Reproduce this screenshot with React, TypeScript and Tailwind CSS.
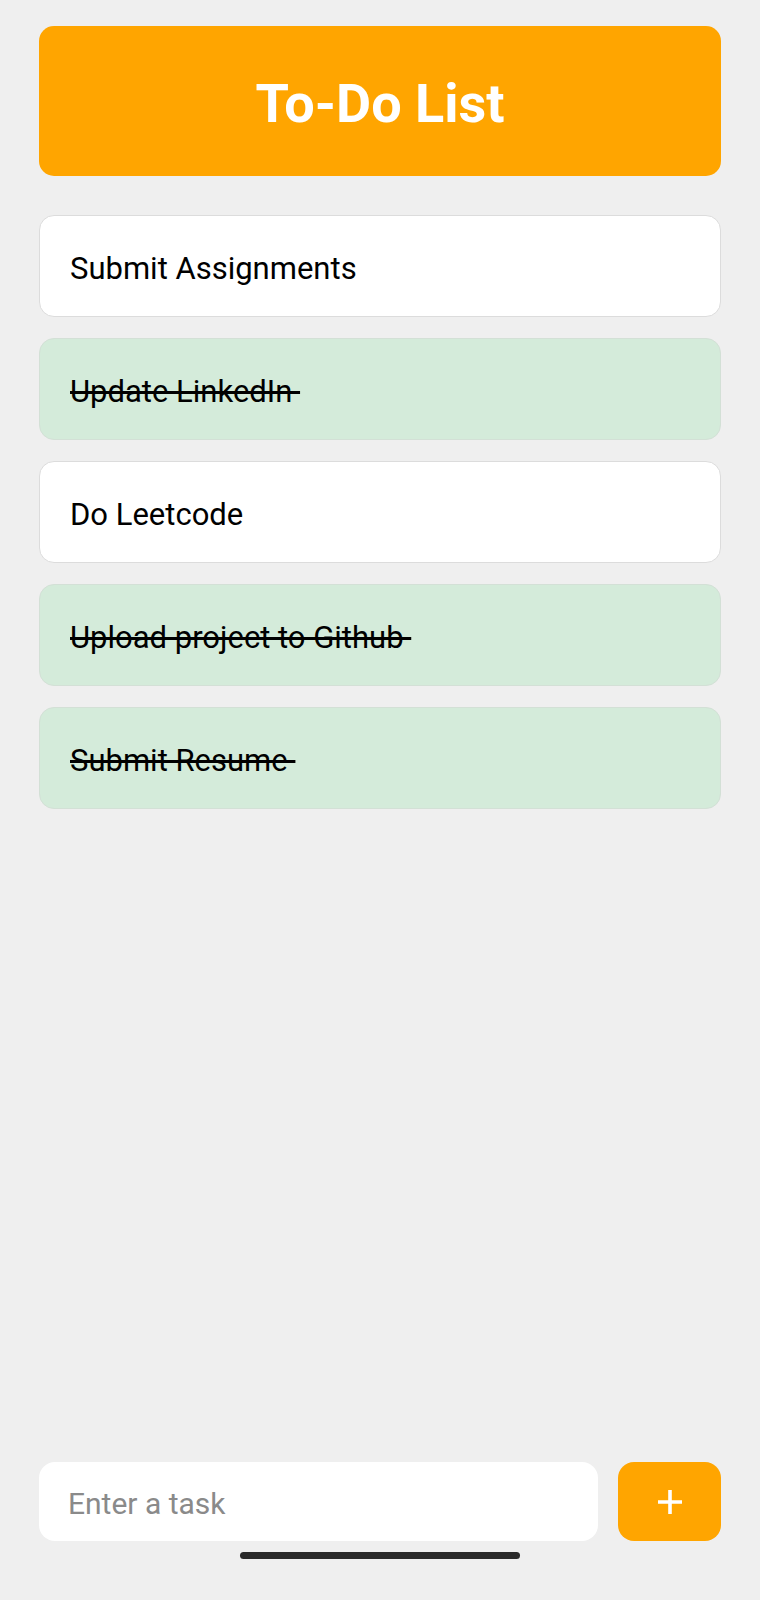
import { useState } from 'react';

type Task = {
  text: string;
  done: boolean;
};

const initialTasks: Task[] = [
  { text: 'Submit Assignments', done: false },
  { text: 'Update LinkedIn', done: true },
  { text: 'Do Leetcode', done: false },
  { text: 'Upload project to Github', done: true },
  { text: 'Submit Resume', done: true },
];

export default function App() {
  const [tasks, setTasks] = useState<Task[]>(initialTasks);
  const [value, setValue] = useState('');

  const toggle = (i: number) => {
    setTasks(tasks.map((t, idx) => (idx === i ? { ...t, done: !t.done } : t)));
  };

  const addTask = () => {
    if (!value.trim()) return;
    setTasks([...tasks, { text: value.trim(), done: false }]);
    setValue('');
  };

  return (
    <div
      className="h-[1600px] bg-[#efefef] flex flex-col px-[39px] pt-[26px] pb-[41px]"
      style={{ fontFamily: 'Roboto, "Liberation Sans", sans-serif' }}
    >
      <div className="h-[150px] bg-[#ffa500] rounded-[15px] flex items-center justify-center">
        <h1 className="text-[54px] font-bold text-white leading-none mt-[6px]">To-Do List</h1>
      </div>

      <div className="flex flex-col gap-[21px] mt-[39px]">
        {tasks.map((task, i) => (
          <div
            key={i}
            onClick={() => toggle(i)}
            className={
              task.done
                ? 'h-[102px] rounded-[15px] border border-[#d3e0d6] bg-[#d4ebda] flex items-center pl-[30px]'
                : 'h-[102px] rounded-[15px] border border-[#dcdcdc] bg-white flex items-center pl-[30px]'
            }
          >
            <span
              className={
                task.done
                  ? 'text-[31px] text-black line-through whitespace-pre mt-[7px]'
                  : 'text-[31px] text-black whitespace-pre mt-[7px]'
              }
            >
              {task.done ? task.text + ' ' : task.text}
            </span>
          </div>
        ))}
      </div>

      <div className="flex-1" />

      <div className="flex gap-[20px] h-[79px]">
        <input
          value={value}
          onChange={(e) => setValue(e.target.value)}
          placeholder="Enter a task"
          className="flex-1 min-w-0 h-full bg-white rounded-[16px] pl-[29px] pt-[4px] text-[30px] text-black placeholder:text-[#8a8a8a] outline-none"
        />
        <button
          onClick={addTask}
          className="w-[103px] h-full bg-[#ffa500] rounded-[16px] flex items-center justify-center"
        >
          <svg width="24" height="26" viewBox="0 0 24 26">
            <path d="M12 1v24M0 13h24" stroke="white" strokeWidth="3.6" />
          </svg>
        </button>
      </div>

      <div className="flex justify-center mt-[11px]">
        <div className="w-[280px] h-[7px] rounded-full bg-[#2a2a2a]" />
      </div>
    </div>
  );
}
